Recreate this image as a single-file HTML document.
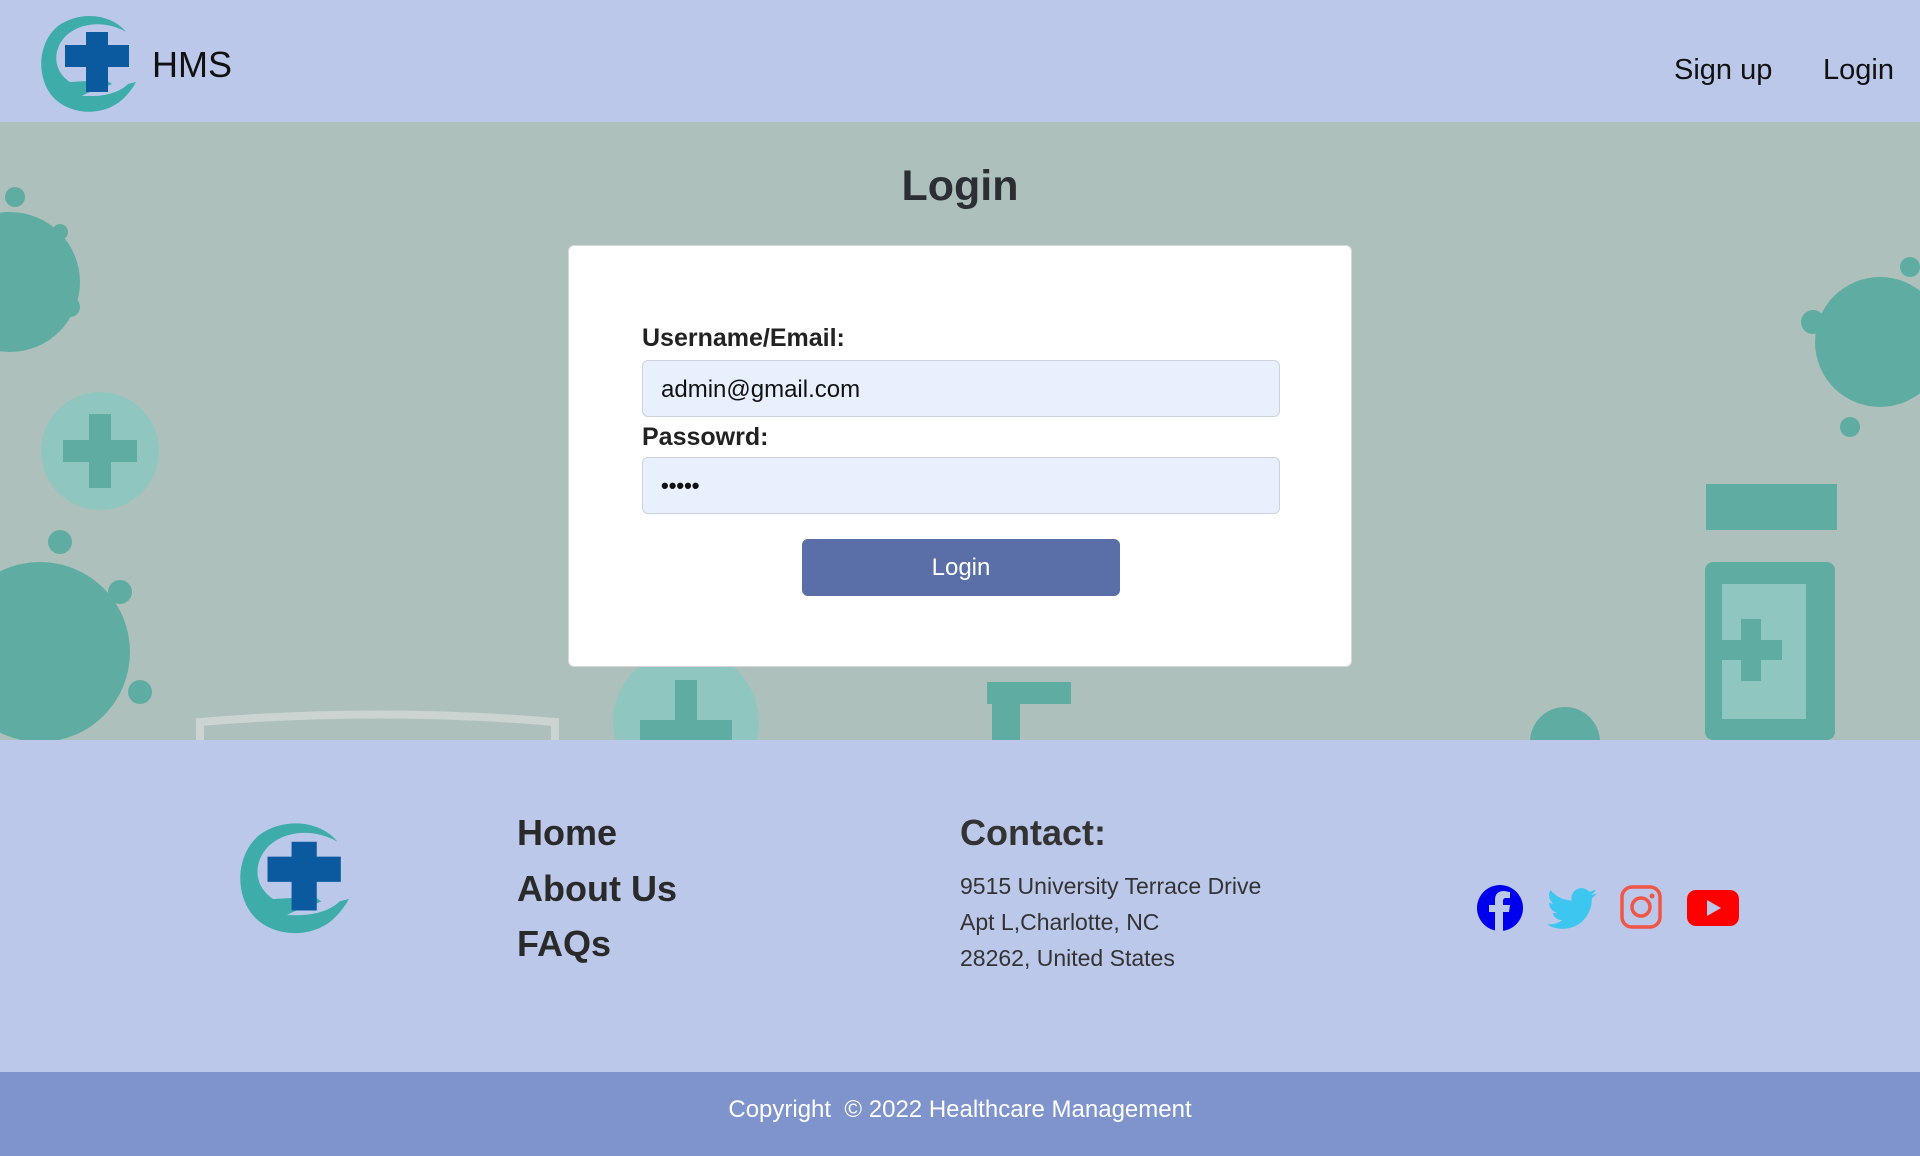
<!DOCTYPE html>
<html><head><meta charset="utf-8"><style>
*{margin:0;padding:0;box-sizing:border-box}
body{width:1920px;height:1156px;overflow:hidden;font-family:"Liberation Sans",sans-serif;color:#212529;background:#bbc8ea}
.hdr{position:absolute;left:0;top:0;width:1920px;height:122px;background:#bbc8ea}
.hms{position:absolute;left:152px;top:44px;font-size:36px;color:#111}
.nav{position:absolute;top:54px;font-size:29px;color:#111}
.ban{position:absolute;left:0;top:122px;width:1920px;height:618px;background:#aec0bb;overflow:hidden}
h1{position:absolute;left:0;width:1920px;text-align:center;font-size:43px;font-weight:600;color:#2b2f33}
.card{position:absolute;left:568px;top:123px;width:784px;height:422px;background:#fff;border-radius:6px;border:1px solid #d6d6d6}
.lbl{position:absolute;left:73px;font-size:25px;font-weight:bold;color:#222}
.inp{position:absolute;left:73px;width:638px;height:57px;background:#e8f0fe;border:1px solid #ccd3dc;border-radius:6px;font-size:24px;padding:15px 18px;color:#111}
.btn{position:absolute;left:233px;top:293px;width:318px;height:57px;background:#5a6ea8;border-radius:6px;color:#fff;font-size:24px;text-align:center;line-height:57px}
.ft{position:absolute;left:0;top:740px;width:1920px;height:332px;background:#bbc8ea}
.lnk{position:absolute;left:517px;font-size:36px;color:#2a2a2a;font-weight:600}
.addr{position:absolute;left:960px;font-size:23px;color:#333}
.bot{position:absolute;left:0;top:1072px;width:1920px;height:84px;background:#7f94cc;color:#fff;font-size:24px;text-align:center;line-height:76px}
</style></head><body>
<div class="hdr">
<svg style="position:absolute;left:34px;top:12px" width="110" height="105" viewBox="0 0 110 105">
<path d="M92 20 C78 2 46 -2 24 14 C2 32 2 70 22 88 C40 104 72 104 90 86 C96 80 100 74 102 70 L94 72 C86 80 72 84 58 84 L48 84 C58 78 70 76 78 72 L72 68 L36 70 C20 60 18 40 30 26 C44 10 72 8 92 20Z" fill="#3eadaa"/>
<rect x="31" y="33" width="64" height="22" fill="#0b5aa0"/>
<rect x="52" y="20" width="22" height="60" fill="#0b5aa0"/>
</svg>
<div class="hms">HMS</div>
<div class="nav" style="left:1674px">Sign up</div>
<div class="nav" style="left:1823px">Login</div>
</div>
<div class="ban">
<svg width="1920" height="618" style="position:absolute;left:0;top:0">
<g fill="#5fada2">
<circle cx="10" cy="160" r="70"/><circle cx="15" cy="75" r="10"/><circle cx="70" cy="185" r="10"/><circle cx="60" cy="110" r="8"/>
<circle cx="40" cy="530" r="90"/><circle cx="60" cy="420" r="12"/><circle cx="120" cy="470" r="12"/><circle cx="140" cy="570" r="12"/>
<circle cx="1880" cy="220" r="65"/><circle cx="1813" cy="200" r="12"/><circle cx="1850" cy="305" r="10"/><circle cx="1910" cy="145" r="10"/>
<circle cx="1565" cy="620" r="35"/>
<rect x="1706" y="362" width="131" height="46"/>
<rect x="1705" y="440" width="130" height="178" rx="8"/>
<rect x="987" y="560" width="84" height="22"/><rect x="992" y="575" width="28" height="45"/>
</g>
<circle cx="100" cy="329" r="59" fill="#8fc6bf"/>
<rect x="63" y="318" width="74" height="22" fill="#5fada2"/><rect x="89" y="292" width="22" height="74" fill="#5fada2"/>
<circle cx="686" cy="600" r="73" fill="#8fc6bf"/>
<rect x="640" y="598" width="92" height="22" fill="#5fada2"/><rect x="675" y="558" width="22" height="60" fill="#5fada2"/>
<rect x="1722" y="462" width="84" height="135" fill="#8fc6bf"/>
<rect x="1720" y="518" width="62" height="20" fill="#5fada2"/><rect x="1741" y="497" width="20" height="62" fill="#5fada2"/>
<path d="M200 618 L200 600 Q380 585 555 600 L555 618" fill="none" stroke="#ccd4d2" stroke-width="8"/>
</svg>
<h1 style="top:40px">Login</h1>
<div class="card">
<div class="lbl" style="top:78px">Username/Email:</div>
<div class="inp" style="top:114px">admin@gmail.com</div>
<div class="lbl" style="top:177px">Passowrd:</div>
<div class="inp" style="top:211px;font-size:22px;font-weight:bold">•••••</div>
<div class="btn">Login</div>
</div>
</div>
<div class="ft">
<svg style="position:absolute;left:232px;top:74px" width="126" height="130" viewBox="0 0 110 105">
<path d="M92 20 C78 2 46 -2 24 14 C2 32 2 70 22 88 C40 104 72 104 90 86 C96 80 100 74 102 70 L94 72 C86 80 72 84 58 84 L48 84 C58 78 70 76 78 72 L72 68 L36 70 C20 60 18 40 30 26 C44 10 72 8 92 20Z" fill="#3eadaa"/>
<rect x="31" y="33" width="64" height="22" fill="#0b5aa0"/>
<rect x="52" y="20" width="22" height="60" fill="#0b5aa0"/>
</svg>
<div class="lnk" style="top:72px">Home</div>
<div class="lnk" style="top:128px">About Us</div>
<div class="lnk" style="top:183px">FAQs</div>
<div class="lnk" style="left:960px;top:72px;color:#333">Contact:</div>
<div class="addr" style="top:133px">9515 University Terrace Drive</div>
<div class="addr" style="top:169px">Apt L,Charlotte, NC</div>
<div class="addr" style="top:205px">28262, United States</div>
<svg style="position:absolute;left:1476px;top:144px" width="48" height="48" viewBox="0 0 48 48"><circle cx="24" cy="24" r="23" fill="#0000ee"/><path d="M27 48 V28 h6 l1-7 h-7 v-4 c0-2 1-3 3-3 h4 v-6 c-2 0-4-1-6-1 c-6 0-9 3-9 9 v5 h-6 v7 h6 v20z" fill="#bbc8ea"/></svg>
<svg style="position:absolute;left:1547px;top:148px" width="50" height="42" viewBox="0 0 24 20"><path d="M24 2.4c-.9.4-1.8.7-2.8.8 1-.6 1.8-1.6 2.2-2.7-1 .6-2 1-3.1 1.200C19.3.7 18 0 16.6 0c-2.7 0-4.9 2.2-4.9 4.9 0 .4 0 .8.1 1.1C7.7 5.8 4.1 3.9 1.7.9c-.4.7-.7 1.600-.7 2.5 0 1.7.9 3.2 2.2 4.1-.8 0-1.6-.2-2.2-.6v.1c0 2.4 1.7 4.4 3.9 4.8-.4.1-.8.2-1.3.2-.3 0-.6 0-.9-.1.6 2 2.4 3.4 4.6 3.4-1.7 1.3-3.8 2.1-6.1 2.1-.4 0-.8 0-1.2-.1 2.2 1.4 4.8 2.2 7.5 2.2 9.1 0 14-7.5 14-14v-.6c1-.7 1.8-1.6 2.5-2.5z" fill="#3cc6f0"/></svg>
<svg style="position:absolute;left:1620px;top:145px" width="42" height="44" viewBox="0 0 42 44"><rect x="2" y="2" width="38" height="40" rx="10" fill="none" stroke="#f05545" stroke-width="3.5"/><circle cx="21" cy="22" r="9" fill="none" stroke="#f05545" stroke-width="3.5"/><circle cx="32" cy="11" r="2.5" fill="#f05545"/></svg>
<svg style="position:absolute;left:1687px;top:150px" width="52" height="36" viewBox="0 0 52 36"><rect x="0" y="0" width="52" height="36" rx="9" fill="#ff0000"/><path d="M20 10 L34 18 L20 26Z" fill="#bbc8ea"/></svg>
</div>
<div class="bot">Copyright &nbsp;© 2022 Healthcare Management</div>
</body></html>
